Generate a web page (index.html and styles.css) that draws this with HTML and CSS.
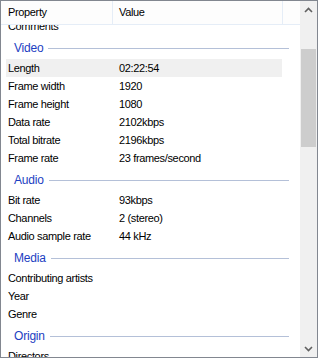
FILE: index.html
```html
<!DOCTYPE html>
<html lang="en">
<head>
  <meta charset="UTF-8" />
  <title>Properties</title>
  <link rel="stylesheet" href="styles.css">
</head>
<body>
  <div class="frame">
    <div class="list">
      <div class="header">
        <div class="head-cell prop">Property</div>
        <div class="head-cell value">Value</div>
        <div class="head-cell rest"></div>
      </div>
      <div class="rows">
        <div class="row"><span class="prop">Comments</span><span class="value"></span></div>

        <div class="group"><span>Video</span><i></i></div>
        <div class="row selected"><span class="prop">Length</span><span class="value">02:22:54</span></div>
        <div class="row"><span class="prop">Frame width</span><span class="value">1920</span></div>
        <div class="row"><span class="prop">Frame height</span><span class="value">1080</span></div>
        <div class="row"><span class="prop">Data rate</span><span class="value">2102kbps</span></div>
        <div class="row"><span class="prop">Total bitrate</span><span class="value">2196kbps</span></div>
        <div class="row"><span class="prop">Frame rate</span><span class="value">23 frames/second</span></div>

        <div class="group"><span>Audio</span><i></i></div>
        <div class="row"><span class="prop">Bit rate</span><span class="value">93kbps</span></div>
        <div class="row"><span class="prop">Channels</span><span class="value">2 (stereo)</span></div>
        <div class="row"><span class="prop">Audio sample rate</span><span class="value">44 kHz</span></div>

        <div class="group"><span>Media</span><i></i></div>
        <div class="row"><span class="prop">Contributing artists</span><span class="value"></span></div>
        <div class="row"><span class="prop">Year</span><span class="value"></span></div>
        <div class="row"><span class="prop">Genre</span><span class="value"></span></div>

        <div class="group"><span>Origin</span><i></i></div>
        <div class="row"><span class="prop">Directors</span><span class="value"></span></div>
      </div>
    </div>
    <div class="scrollbar">
      <div class="arrow">
        <svg width="9" height="6" viewBox="0 0 9 6"><polyline points="1,5 4.5,1.5 8,5" fill="none" stroke="#606060" stroke-width="1.6"/></svg>
      </div>
      <div class="track">
        <div class="thumb"></div>
      </div>
      <div class="arrow">
        <svg width="9" height="6" viewBox="0 0 9 6"><polyline points="1,1 4.5,4.5 8,1" fill="none" stroke="#606060" stroke-width="1.6"/></svg>
      </div>
    </div>
  </div>
</body>
</html>
```
FILE: styles.css
```css
html, body {
  margin: 0;
  padding: 0;
  background: #ffffff;
}

body {
  font-family: "Liberation Sans", Arial, sans-serif;
  font-size: 11px;
  letter-spacing: -0.35px;
  color: #000000;
}

.frame {
  width: 318px;
  height: 358px;
  box-sizing: border-box;
  border: 1px solid #828790;
  display: flex;
  overflow: hidden;
}

.list {
  flex: 1;
  display: flex;
  flex-direction: column;
  overflow: hidden;
}

.header {
  height: 23px;
  flex-shrink: 0;
  display: flex;
  background: #fdfdfd;
  border-bottom: 1px solid #e5edf7;
  position: relative;
  z-index: 1;
}

.head-cell {
  line-height: 23px;
  box-sizing: border-box;
}

.head-cell.prop {
  width: 112px;
  padding-left: 7px;
  border-right: 1px solid #e5edf7;
}

.head-cell.value {
  width: 170px;
  padding-left: 6px;
  border-right: 1px solid #e5edf7;
}

.head-cell.rest {
  flex: 1;
}

.rows {
  margin-top: -8px;
}

.row {
  display: flex;
  height: 18px;
  line-height: 18px;
  margin-left: 5px;
  width: 276px;
  white-space: nowrap;
}

.row.selected {
  background: #f0f0f0;
}

.row .prop {
  width: 111px;
  padding-left: 2px;
}

.row .value {
  flex: 1;
}

.group {
  height: 24px;
  box-sizing: border-box;
  padding-top: 4px;
  padding-left: 13px;
  display: flex;
  align-items: center;
  width: 288px;
}

.group span {
  height: 18px;
  line-height: 18px;
  color: #1c3ec2;
  font-size: 12px;
  letter-spacing: -0.2px;
  padding-bottom: 2px;
}

.group i {
  flex: 1;
  height: 1px;
  margin-left: 5px;
  margin-bottom: 2px;
  background: #b4c0d8;
}

.scrollbar {
  width: 17px;
  flex-shrink: 0;
  background: #f0f0f0;
  display: flex;
  flex-direction: column;
}

.arrow {
  height: 17px;
  display: flex;
  align-items: center;
  justify-content: center;
}

.track {
  flex: 1;
  padding-top: 31px;
}

.thumb {
  margin-left: 1px;
  width: 15px;
  height: 98px;
  background: #cdcdcd;
}
```
